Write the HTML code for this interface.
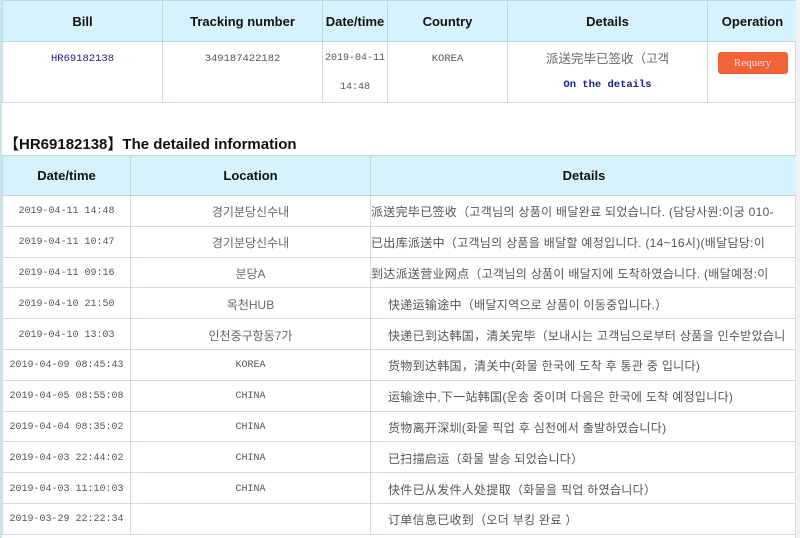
<!DOCTYPE html>
<html><head><meta charset="utf-8"><style>
*{margin:0;padding:0;box-sizing:border-box}
body{width:800px;height:538px;overflow:hidden;background:#fff;font-family:"Liberation Sans","Noto Sans CJK KR",sans-serif;position:relative}
.wrap{position:absolute;left:0;top:0;width:796px;height:538px;border-left:2px solid #cfe3ea;border-right:1px solid #d6dde0}
.side{position:absolute;left:796px;top:0;width:4px;height:538px;background:#f2f2f2}
table{border-collapse:collapse;table-layout:fixed;position:absolute;left:0;width:795px}
th{background:#d6f3fb;font-weight:bold;font-size:13px;color:#111;border:1px solid #b9d9e3;height:41px}
td{border:1px solid #cfdde3;text-align:center;font-family:"Liberation Mono","Noto Sans CJK KR",monospace;font-size:10px;color:#555;white-space:nowrap;overflow:hidden}
#t1{top:0}
#t1 td{height:61px;vertical-align:top;padding-top:10px;line-height:14px;font-size:10.5px}
#t2{top:155px}
#t2 th{height:40px}
#t2 td{height:30.8px;padding-top:2px}
.k{font-family:"Liberation Sans","Noto Sans CJK KR",sans-serif;font-size:12px;color:#666}
.det{text-align:left;font-family:"Liberation Sans","Noto Sans CJK SC",sans-serif;font-size:12px;color:#555;letter-spacing:0.3px}
.i{padding-left:17px}
.btn{display:inline-block;background:#f26437;color:#fde;border-radius:3px;width:70px;height:22px;line-height:22px;font-family:"Liberation Serif",serif;font-size:11px;margin-top:0}
h2{position:absolute;left:2px;top:133px;font-size:15px;font-weight:bold;color:#111}
</style></head><body>
<div class="wrap">
<table id="t1"><colgroup><col style="width:160px"><col style="width:160px"><col style="width:65px"><col style="width:120px"><col style="width:200px"><col style="width:90px"></colgroup>
<tr><th>Bill</th><th>Tracking number</th><th>Date/time</th><th>Country</th><th>Details</th><th>Operation</th></tr>
<tr><td style="color:#1a237e">HR69182138</td><td>349187422182</td><td style="line-height:29px;padding-top:2px;font-size:10px">2019-04-11<br>14:48</td><td>KOREA</td><td><span style="font-family:'Liberation Sans','Noto Sans CJK SC',sans-serif;font-size:12.5px;color:#666">派送完毕已签收（고객</span><br><span style="display:inline-block;margin-top:10px;color:#1a237e;font-weight:bold">On the details</span></td><td><span class="btn">Requery</span></td></tr>
</table>
<h2>【HR69182138】The detailed information</h2>
<table id="t2"><colgroup><col style="width:128px"><col style="width:240px"><col style="width:427px"></colgroup>
<tr><th>Date/time</th><th>Location</th><th>Details</th></tr>
<tr><td>2019-04-11 14:48</td><td class="k">경기분당신수내</td><td class="det">派送完毕已签收（고객님의 상품이 배달완료 되었습니다. (담당사원:이궁 010-</td></tr>
<tr><td>2019-04-11 10:47</td><td class="k">경기분당신수내</td><td class="det">已出库派送中（고객님의 상품을 배달할 예정입니다. (14~16시)(배달담당:이</td></tr>
<tr><td>2019-04-11 09:16</td><td class="k">분당A</td><td class="det">到达派送营业网点（고객님의 상품이 배달지에 도착하였습니다. (배달예정:이</td></tr>
<tr><td>2019-04-10 21:50</td><td class="k">옥천HUB</td><td class="det i">快递运输途中（배달지역으로 상품이 이동중입니다.）</td></tr>
<tr><td>2019-04-10 13:03</td><td class="k">인천중구항동7가</td><td class="det i">快递已到达韩国，清关完毕（보내시는 고객님으로부터 상품을 인수받았습니</td></tr>
<tr><td>2019-04-09 08:45:43</td><td>KOREA</td><td class="det i">货物到达韩国，清关中(화물 한국에 도착 후 통관 중 입니다)</td></tr>
<tr><td>2019-04-05 08:55:08</td><td>CHINA</td><td class="det i">运输途中,下一站韩国(운송 중이며 다음은 한국에 도착 예정입니다)</td></tr>
<tr><td>2019-04-04 08:35:02</td><td>CHINA</td><td class="det i">货物离开深圳(화물 픽업 후 심천에서 출발하였습니다)</td></tr>
<tr><td>2019-04-03 22:44:02</td><td>CHINA</td><td class="det i">已扫描启运（화물 발송 되었습니다）</td></tr>
<tr><td>2019-04-03 11:10:03</td><td>CHINA</td><td class="det i">快件已从发件人处提取（화물을 픽업 하였습니다）</td></tr>
<tr><td>2019-03-29 22:22:34</td><td></td><td class="det i">订单信息已收到（오더 부킹 완료 ）</td></tr>
</table>
</div>
<div class="side"></div>
</body></html>
